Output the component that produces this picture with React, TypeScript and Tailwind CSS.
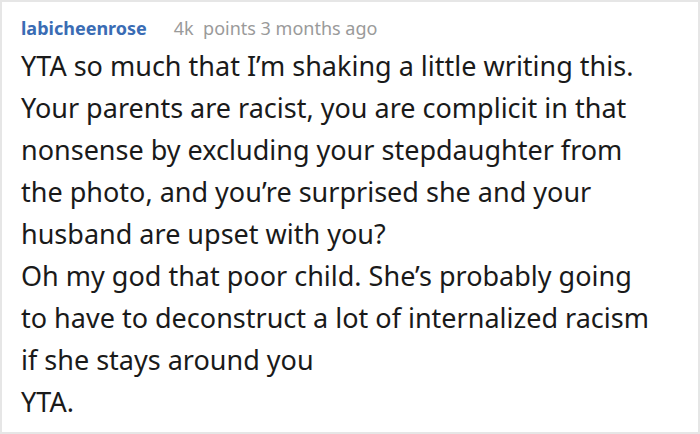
export default function App() {
  const lines = [
    "YTA so much that I’m shaking a little writing this.",
    "Your parents are racist, you are complicit in that",
    "nonsense by excluding your stepdaughter from",
    "the photo, and you’re surprised she and your",
    "husband are upset with you?",
    "Oh my god that poor child. She’s probably going",
    "to have to deconstruct a lot of internalized racism",
    "if she stays around you",
    "YTA.",
  ];

  return (
    <div
      className="w-[700px] h-[434px] bg-white border-2 border-[#e6e6e6] overflow-hidden"
      style={{ fontFamily: '"Noto Sans", sans-serif' }}
    >
      <div className="pl-[19px] pt-[14px]">
        <div className="flex items-baseline gap-[27px] text-[18px] leading-[24px]">
          <span className="font-bold text-[#3a6cb4]">labicheenrose</span>
          <span className="text-[#9a9a9a]">4k&nbsp; points 3 months ago</span>
        </div>
        <div className="mt-[5px] text-[27px] leading-[42px] text-[#1a1a1a]">
          {lines.map((l, i) => (
            <div key={i}>{l}</div>
          ))}
        </div>
      </div>
    </div>
  );
}
